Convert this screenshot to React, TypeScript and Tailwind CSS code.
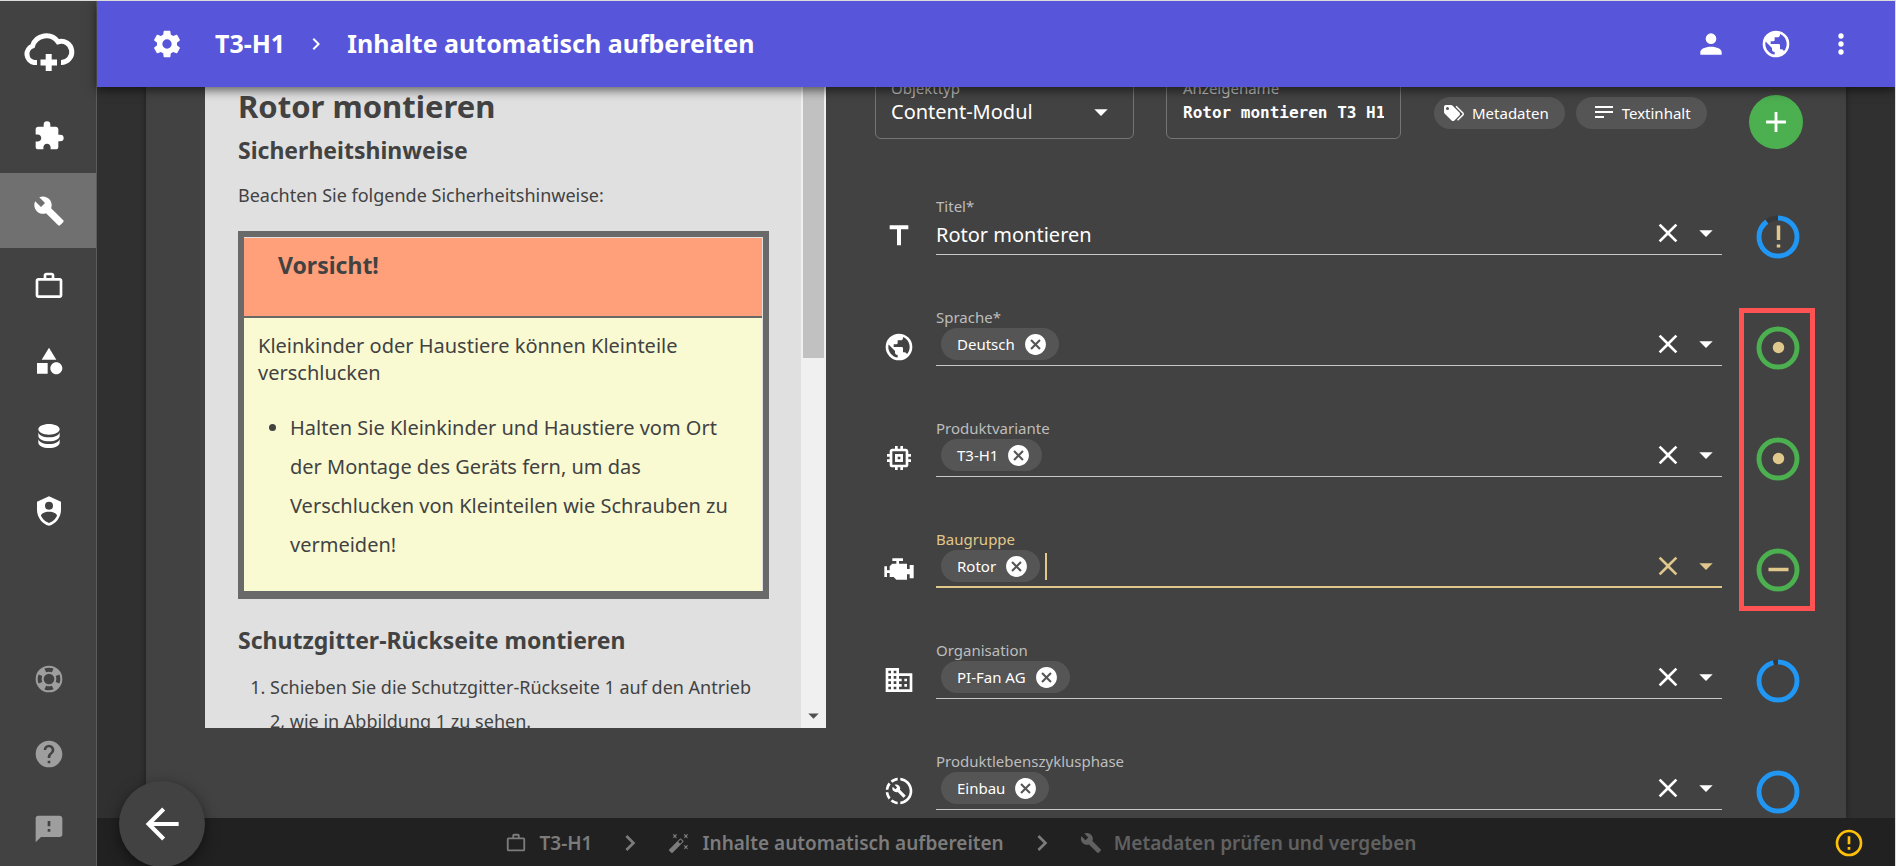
import { useState } from "react";
import type { ReactNode } from "react";

// Icon outlines on a 24x24 grid
const icons = {
  cog: "M12,15.5A3.5,3.5 0 0,1 8.5,12A3.5,3.5 0 0,1 12,8.5A3.5,3.5 0 0,1 15.5,12A3.5,3.5 0 0,1 12,15.5M19.43,12.97C19.47,12.65 19.5,12.33 19.5,12C19.5,11.67 19.47,11.34 19.43,11L21.54,9.37C21.73,9.22 21.78,8.95 21.66,8.73L19.66,5.27C19.54,5.05 19.27,4.96 19.05,5.05L16.56,6.05C16.04,5.66 15.5,5.32 14.87,5.07L14.5,2.42C14.46,2.18 14.25,2 14,2H10C9.75,2 9.54,2.18 9.5,2.42L9.13,5.07C8.5,5.32 7.96,5.66 7.44,6.05L4.95,5.05C4.73,4.96 4.46,5.05 4.34,5.27L2.34,8.73C2.21,8.95 2.27,9.22 2.46,9.37L4.57,11C4.53,11.34 4.5,11.67 4.5,12C4.5,12.33 4.53,12.65 4.57,12.97L2.46,14.63C2.27,14.78 2.21,15.05 2.34,15.27L4.34,18.73C4.46,18.95 4.73,19.03 4.95,18.95L7.44,17.94C7.96,18.34 8.5,18.68 9.13,18.93L9.5,21.58C9.54,21.82 9.75,22 10,22H14C14.25,22 14.46,21.82 14.5,21.58L14.87,18.93C15.5,18.67 16.04,18.34 16.56,17.94L19.05,18.95C19.27,19.03 19.54,18.95 19.66,18.73L21.66,15.27C21.78,15.05 21.73,14.78 21.54,14.63L19.43,12.97Z",
  puzzle: "M20.5,11H19V7C19,5.89 18.1,5 17,5H13V3.5A2.5,2.5 0 0,0 10.5,1A2.5,2.5 0 0,0 8,3.5V5H4A2,2 0 0,0 2,7V10.8H3.5C5,10.8 6.2,12 6.2,13.5C6.2,15 5,16.2 3.5,16.2H2V20A2,2 0 0,0 4,22H7.8V20.5C7.8,19 9,17.8 10.5,17.8C12,17.8 13.2,19 13.2,20.5V22H17A2,2 0 0,0 19,20V16H20.5A2.5,2.5 0 0,0 23,13.5A2.5,2.5 0 0,0 20.5,11Z",
  wrench: "M22.7,19L13.6,9.9C14.5,7.6 14,4.9 12.1,3C10.1,1 7.1,0.6 4.7,1.7L9,6L6,9L1.6,4.7C0.4,7.1 0.9,10.1 2.9,12.1C4.8,14 7.5,14.5 9.8,13.6L18.9,22.7C19.3,23.1 19.9,23.1 20.3,22.7L22.6,20.4C23.1,20 23.1,19.3 22.7,19Z",
  briefcase: "M20,6C20.58,6 21.05,6.2 21.42,6.59C21.8,7 22,7.45 22,8V19C22,19.55 21.8,20 21.42,20.41C21.05,20.8 20.58,21 20,21H4C3.42,21 2.95,20.8 2.58,20.41C2.2,20 2,19.55 2,19V8C2,7.45 2.2,7 2.58,6.59C2.95,6.2 3.42,6 4,6H8V4C8,3.42 8.2,2.95 8.58,2.58C8.95,2.2 9.42,2 10,2H14C14.58,2 15.05,2.2 15.42,2.58C15.8,2.95 16,3.42 16,4V6H20M4,8V19H20V8H4M14,6V4H10V6H14Z",
  shape: "M11,13.5V21.5H3V13.5H11M12,2L17.5,11H6.5L12,2M17.5,13C20,13 22,15 22,17.5C22,20 20,22 17.5,22C15,22 13,20 13,17.5C13,15 15,13 17.5,13Z",
  database: "M12,3C7.58,3 4,4.79 4,7C4,9.21 7.58,11 12,11C16.42,11 20,9.21 20,7C20,4.79 16.42,3 12,3M4,9V12C4,14.21 7.58,16 12,16C16.42,16 20,14.21 20,12V9C20,11.21 16.42,13 12,13C7.58,13 4,11.21 4,9M4,14V17C4,19.21 7.58,21 12,21C16.42,21 20,19.21 20,17V14C20,16.21 16.42,18 12,18C7.58,18 4,16.21 4,14Z",
  shield: "M12,1L3,5V11C3,16.55 6.84,21.74 12,23C17.16,21.74 21,16.55 21,11V5L12,1M12,5A3,3 0 0,1 15,8A3,3 0 0,1 12,11A3,3 0 0,1 9,8A3,3 0 0,1 12,5M17.13,17C15.92,18.85 14.11,20.24 12,20.92C9.89,20.24 8.08,18.85 6.87,17C6.53,16.5 6.24,16 6,15.47C6,13.82 8.71,12.47 12,12.47C15.29,12.47 18,13.79 18,15.47C17.76,16 17.47,16.5 17.13,17Z",
  lifebuoy: "M19.79,15.41C20.74,13.24 20.74,10.75 19.79,8.59L17.05,9.83C17.65,11.21 17.65,12.78 17.06,14.17L19.79,15.41M15.42,4.21C13.25,3.26 10.76,3.26 8.59,4.21L9.83,6.94C11.22,6.35 12.79,6.35 14.18,6.95L15.42,4.21M4.21,8.58C3.26,10.76 3.26,13.24 4.21,15.42L6.95,14.17C6.35,12.79 6.35,11.21 6.95,9.82L4.21,8.58M8.59,19.79C10.76,20.74 13.25,20.74 15.42,19.78L14.18,17.05C12.8,17.65 11.22,17.65 9.84,17.06L8.59,19.79M12,2A10,10 0 0,1 22,12A10,10 0 0,1 12,22A10,10 0 0,1 2,12A10,10 0 0,1 12,2M12,8A4,4 0 0,0 8,12A4,4 0 0,0 12,16A4,4 0 0,0 16,12A4,4 0 0,0 12,8Z",
  help: "M15.07,11.25L14.17,12.17C13.45,12.89 13,13.5 13,15H11V14.5C11,13.39 11.45,12.39 12.17,11.67L13.41,10.41C13.78,10.05 14,9.55 14,9C14,7.89 13.1,7 12,7A2,2 0 0,0 10,9H8A4,4 0 0,1 12,5A4,4 0 0,1 16,9C16,9.88 15.64,10.67 15.07,11.25M13,19H11V17H13M12,2A10,10 0 0,0 2,12A10,10 0 0,0 12,22A10,10 0 0,0 22,12C22,6.47 17.5,2 12,2Z",
  message: "M13,10H11V6H13M13,14H11V12H13M20,2H4A2,2 0 0,0 2,4V22L6,18H20A2,2 0 0,0 22,16V4C22,2.89 21.1,2 20,2Z",
  account: "M12,4A4,4 0 0,1 16,8A4,4 0 0,1 12,12A4,4 0 0,1 8,8A4,4 0 0,1 12,4M12,14C16.42,14 20,15.79 20,18V20H4V18C4,15.79 7.58,14 12,14Z",
  earth: "M17.9,17.39C17.64,16.59 16.89,16 16,16H15V13A1,1 0 0,0 14,12H8V10H10A1,1 0 0,0 11,9V7H13A2,2 0 0,0 15,5V4.59C17.93,5.77 20,8.64 20,12C20,14.08 19.2,15.97 17.9,17.39M11,19.93C7.05,19.44 4,16.08 4,12C4,11.38 4.08,10.78 4.21,10.21L9,15V16A2,2 0 0,0 11,18M12,2A10,10 0 0,0 2,12A10,10 0 0,0 12,22A10,10 0 0,0 22,12A10,10 0 0,0 12,2Z",
  dots: "M12,16A2,2 0 0,1 14,18A2,2 0 0,1 12,20A2,2 0 0,1 10,18A2,2 0 0,1 12,16M12,10A2,2 0 0,1 14,12A2,2 0 0,1 12,14A2,2 0 0,1 10,12A2,2 0 0,1 12,10M12,4A2,2 0 0,1 14,6A2,2 0 0,1 12,8A2,2 0 0,1 10,6A2,2 0 0,1 12,4Z",
  title: "M5,4V7H10.5V19H13.5V7H19V4H5Z",
  memory: "M17,17H7V7H17M21,11V9H19V7C19,5.89 18.1,5 17,5H15V3H13V5H11V3H9V5H7C5.89,5 5,5.89 5,7V9H3V11H5V13H3V15H5V17A2,2 0 0,0 7,19H9V21H11V19H13V21H15V19H17A2,2 0 0,0 19,17V15H21V13H19V11M13,13H11V11H13M15,9H9V15H15V9Z",
  engine: "M7,4V6H10V8H7L5,10V13H3V10H1V18H3V15H5V18H8L10,20H18V16H20V19H23V9H20V12H18V8H12V6H15V4H7Z",
  domain: "M18,15H16V17H18M18,11H16V13H18M20,19H12V17H14V15H12V13H14V11H12V9H20M10,7H8V5H10M10,11H8V9H10M10,15H8V13H10M10,19H8V17H10M6,7H4V5H6M6,11H4V9H6M6,15H4V13H6M6,19H4V17H6M12,7V3H2V21H22V7H12Z",
  progressWrench: "M13 2.03V4.05C17.39 4.59 20.5 8.58 19.96 12.97C19.5 16.61 16.64 19.5 13 19.93V21.93C18.5 21.38 22.5 16.5 21.95 11C21.5 6.25 17.73 2.5 13 2.03M11 2.06C9.05 2.25 7.19 3 5.67 4.26L7.1 5.74C8.22 4.84 9.57 4.26 11 4.06V2.06M4.26 5.67C3 7.19 2.25 9.04 2.05 11H4.05C4.24 9.58 4.8 8.23 5.69 7.1L4.26 5.67M2.06 13C2.26 14.96 3.03 16.81 4.27 18.33L5.69 16.9C4.81 15.77 4.24 14.42 4.06 13H2.06M7.1 18.37L5.67 19.74C7.18 21 9.04 21.79 11 22V20C9.58 19.82 8.23 19.25 7.1 18.37M16.82 15.19L12.71 11.08C13.12 10.04 12.89 8.82 12.03 7.97C11.13 7.06 9.78 6.88 8.69 7.38L10.63 9.32L9.28 10.68L7.29 8.73C6.75 9.82 7 11.17 7.88 12.08C8.74 12.94 9.96 13.16 11 12.76L15.11 16.86C15.29 17.05 15.56 17.05 15.74 16.86L16.78 15.83C17 15.65 17 15.33 16.82 15.19Z",
  tags: "M5.5,9A1.5,1.5 0 0,0 7,7.5A1.5,1.5 0 0,0 5.5,6A1.5,1.5 0 0,0 4,7.5A1.5,1.5 0 0,0 5.5,9M17.41,11.58C17.77,11.94 18,12.44 18,13C18,13.55 17.78,14.05 17.41,14.41L12.41,19.41C12.05,19.77 11.55,20 11,20C10.45,20 9.95,19.78 9.58,19.41L2.59,12.42C2.22,12.05 2,11.55 2,11V6C2,4.89 2.89,4 4,4H9C9.55,4 10.05,4.22 10.41,4.58L17.41,11.58M13.54,5.71L14.54,4.71L21.41,11.58C21.78,11.94 22,12.45 22,13C22,13.55 21.78,14.05 21.42,14.41L16.04,19.79L15.04,18.79L20.75,13L13.54,5.71Z",
  text: "M21,5V7H3V5H21M3,17H12V15H3V17M3,12H21V10H3V12Z",
  close: "M19,6.41L17.59,5L12,10.59L6.41,5L5,6.41L10.59,12L5,17.59L6.41,19L12,13.41L17.59,19L19,17.59L13.41,12L19,6.41Z",
  caret: "M7,10L12,15L17,10H7Z",
  closeCircle: "M12,2C17.53,2 22,6.47 22,12C22,17.53 17.53,22 12,22C6.47,22 2,17.53 2,12C2,6.47 6.47,2 12,2M15.59,7L12,10.59L8.41,7L7,8.41L10.59,12L7,15.59L8.41,17L12,13.41L15.59,17L17,15.59L13.41,12L17,8.41L15.59,7Z",
  chevron: "M8.59,16.58L13.17,12L8.59,7.41L10,6L16,12L10,18L8.59,16.58Z",
  plus: "M19,13H13V19H11V13H5V11H11V5H13V11H19V13Z",
  arrowLeft: "M20,11V13H8L13.5,18.5L12.08,19.92L4.16,12L12.08,4.08L13.5,5.5L8,11H20Z",
  wand: "M7.5,5.6L5,7L6.4,4.5L5,2L7.5,3.4L10,2L8.6,4.5L10,7L7.5,5.6M19.5,15.4L22,14L20.6,16.5L22,19L19.5,17.6L17,19L18.4,16.5L17,14L19.5,15.4M22,2L20.6,4.5L22,7L19.5,5.6L17,7L18.4,4.5L17,2L19.5,3.4L22,2M13.34,12.78L15.78,10.34L13.66,8.22L11.22,10.66L13.34,12.78M14.37,7.29L16.71,9.63C17.1,10 17.1,10.65 16.71,11.04L5.04,22.71C4.65,23.1 4,23.1 3.63,22.71L1.29,20.37C0.9,20 0.9,19.35 1.29,18.96L12.96,7.29C13.35,6.9 14,6.9 14.37,7.29Z",
  alert: "M11,15H13V17H11V15M11,7H13V13H11V7M12,2C6.47,2 2,6.5 2,12A10,10 0 0,0 12,22A10,10 0 0,0 22,12A10,10 0 0,0 12,2M12,20A8,8 0 0,1 4,12A8,8 0 0,1 12,4A8,8 0 0,1 20,12A8,8 0 0,1 12,20Z",
};

type IconName = keyof typeof icons;

function Icon({ name, className = "size-8" }: { name: IconName; className?: string }) {
  return (
    <svg viewBox="0 0 24 24" fill="currentColor" className={`shrink-0 ${className}`} aria-hidden="true">
      <path d={icons[name]} />
    </svg>
  );
}

const mainNav: { icon: IconName; label: string; active?: boolean }[] = [
  { icon: "puzzle", label: "Module" },
  { icon: "wrench", label: "Werkzeuge", active: true },
  { icon: "briefcase", label: "Projekte" },
  { icon: "shape", label: "Klassen" },
  { icon: "database", label: "Daten" },
  { icon: "shield", label: "Benutzer" },
];

const helpNav: { icon: IconName; label: string }[] = [
  { icon: "lifebuoy", label: "Support" },
  { icon: "help", label: "Hilfe" },
  { icon: "message", label: "Feedback" },
];

type Mark = "alert" | "dot" | "minus";

interface FieldData {
  id: string;
  label: string;
  icon: IconName;
  value?: string;
  chip?: string;
  focused?: boolean;
  score: number;
  tone: "blue" | "green";
  mark?: Mark;
}

const fields: FieldData[] = [
  { id: "titel", label: "Titel*", icon: "title", value: "Rotor montieren", score: 90, tone: "blue", mark: "alert" },
  { id: "sprache", label: "Sprache*", icon: "earth", chip: "Deutsch", score: 100, tone: "green", mark: "dot" },
  { id: "variante", label: "Produktvariante", icon: "memory", chip: "T3-H1", score: 100, tone: "green", mark: "dot" },
  { id: "baugruppe", label: "Baugruppe", icon: "engine", chip: "Rotor", focused: true, score: 100, tone: "green", mark: "minus" },
  { id: "organisation", label: "Organisation", icon: "domain", chip: "PI-Fan AG", score: 96, tone: "blue" },
  { id: "phase", label: "Produktlebenszyklusphase", icon: "progressWrench", chip: "Einbau", score: 100, tone: "blue" },
];

export default function App() {
  return (
    <div className="flex h-screen overflow-hidden border-t border-r border-[#dcdcdc] bg-[#303030] font-['Noto_Sans',sans-serif] text-white">
      <Sidebar />
      <div className="relative flex min-w-0 flex-1 flex-col">
        <Header />
        <main className="mx-[49px] min-h-0 flex-1 overflow-hidden bg-[#424242] pr-3 pl-[59px] shadow-[0_0_6px_rgba(0,0,0,0.4)]">
          <div className="grid grid-cols-[621fr_959fr] gap-[49px]">
            <Preview />
            <MetadataForm />
          </div>
        </main>
        <Footer />
        <button aria-label="Zurück"
          className="absolute -bottom-px left-[22px] flex size-[86px] items-center justify-center rounded-full bg-[#424242] shadow-[0_4px_14px_rgba(0,0,0,0.5)]">
          <Icon name="arrowLeft" className="size-[50px]" />
        </button>
      </div>
    </div>
  );
}

function Sidebar() {
  return (
    <nav className="flex w-[97px] shrink-0 flex-col border-r border-[#5c5c5c] bg-[#424242]">
      <a href="#start" aria-label="Start" className="flex h-[97px] items-center justify-center pt-1 pl-0.5">
        <svg viewBox="22 30 54 42" className="h-[42px] w-[54px]" fill="none" stroke="currentColor" strokeWidth="5">
          <path d="M37 61.5H34A8.6 8.6 0 0 1 32.5 45A14.4 14.4 0 0 1 58 40.8A10.6 10.6 0 1 1 61 61.5" />
          <path d="M48.7 53V70M40.5 61.5H57" strokeWidth="6" />
        </svg>
      </a>
      {mainNav.map((item) => (
        <a key={item.icon} href={`#${item.icon}`} aria-label={item.label}
          className={`flex h-[75px] items-center justify-center pl-px ${item.active ? "bg-[#707070]" : ""}`}>
          <Icon name={item.icon} />
        </a>
      ))}
      <div className="mt-auto text-[#9e9e9e]">
        {helpNav.map((item) => (
          <a key={item.icon} href={`#${item.icon}`} aria-label={item.label}
            className="flex h-[75px] items-center justify-center pl-px">
            <Icon name={item.icon} />
          </a>
        ))}
      </div>
    </nav>
  );
}

function Header() {
  return (
    <header className="relative z-10 flex h-[86px] shrink-0 items-center bg-[#5755d9] pr-[38px] pl-[54px] shadow-[0_3px_10px_rgba(0,0,0,0.6)]">
      <Icon name="cog" />
      <h1 className="ml-8 flex items-center gap-[19px] text-[25px] font-bold">
        <span>T3-H1</span>
        <Icon name="chevron" className="size-6" />
        <span>Inhalte automatisch aufbereiten</span>
      </h1>
      <div className="ml-auto flex gap-[33px]">
        <button aria-label="Konto"><Icon name="account" /></button>
        <button aria-label="Sprache"><Icon name="earth" /></button>
        <button aria-label="Mehr"><Icon name="dots" /></button>
      </div>
    </header>
  );
}

function Preview() {
  return (
    <section className="flex h-[641px] overflow-hidden bg-[#e0e0e0] text-[#424242]">
      <div className="min-w-0 flex-1 pr-8 pl-[33px]">
        <h2 className="text-[31px] leading-[38px] font-bold">Rotor montieren</h2>
        <h3 className="mt-2.5 text-[23px] leading-[30px] font-bold">Sicherheitshinweise</h3>
        <p className="mt-4 text-[18px] leading-7">Beachten Sie folgende Sicherheitshinweise:</p>
        <div className="mt-[22px] border-6 border-b-8 border-[#696969]">
          <div className="border-t border-r border-[#e0e0e0]">
            <div className="h-20 border-b-2 border-[#696969] bg-[#ffa07a] px-[34px] pt-3 text-[23px] leading-[30px] font-bold">
              Vorsicht!
            </div>
            <div className="h-[273px] bg-[#fafad2] px-3.5 pt-3.5 text-[20px]">
              <p className="leading-[27px]">Kleinkinder oder Haustiere können Kleinteile verschlucken</p>
              <ul className="mt-[22px] list-disc pl-8 leading-[39px]">
                <li>Halten Sie Kleinkinder und Haustiere vom Ort der Montage des Geräts fern, um das Verschlucken von Kleinteilen wie Schrauben zu vermeiden!</li>
              </ul>
            </div>
          </div>
        </div>
        <h3 className="mt-[26px] text-[23px] leading-[30px] font-bold">Schutzgitter-Rückseite montieren</h3>
        <ol className="mt-[15px] list-decimal pl-8 text-[18px] leading-[34px]">
          <li>Schieben Sie die Schutzgitter-Rückseite 1 auf den Antrieb 2, wie in Abbildung 1 zu sehen.</li>
        </ol>
      </div>
      {/* Scroll track */}
      <div className="flex w-[25px] shrink-0 flex-col items-center justify-between bg-[#f0f0f0]">
        <div className="h-[271px] w-[21px] bg-[#c1c1c1]" />
        <Icon name="caret" className="size-[25px] text-[#505050]" />
      </div>
    </section>
  );
}

function MetadataForm() {
  const [name, setName] = useState("Rotor montieren T3 H1");

  return (
    <form className="-mt-6 min-w-0">
      <div className="flex h-[76px] items-center">
        <div className="relative flex h-full w-[259px] flex-col rounded-md border border-[#757575] px-[15px] pt-3.5">
          <label htmlFor="objekttyp" className="text-[15px] leading-5 text-[#bdbdbd]">Objekttyp</label>
          <select id="objekttyp" className="h-7 appearance-none text-[20px] leading-7 outline-none">
            <option>Content-Modul</option>
          </select>
          <Icon name="caret" className="pointer-events-none absolute right-4 bottom-2.5 size-8" />
        </div>
        <div className="ml-8 flex h-full w-[235px] flex-col rounded-md border border-[#757575] px-4 pt-3.5">
          <label htmlFor="anzeigename" className="text-[15px] leading-5 text-[#bdbdbd]">Anzeigename</label>
          <input id="anzeigename" value={name} onChange={(e) => setName(e.target.value)}
            className="h-7 w-full font-['DejaVu_Sans_Mono',monospace] text-base font-bold outline-none" />
        </div>
        <div className="ml-[33px] flex gap-[11px] pt-6">
          <TabChip icon="tags" className="pr-4 pl-2">Metadaten</TabChip>
          <TabChip icon="text" className="pr-4 pl-4">Textinhalt</TabChip>
        </div>
        <button type="button" aria-label="Hinzufügen"
          className="mt-[42px] mr-[31px] ml-auto flex size-[54px] items-center justify-center rounded-full bg-[#4caf50]">
          <Icon name="plus" className="size-[34px]" />
        </button>
      </div>

      <div className="relative mt-[5px]">
        {fields.map((field) => (
          <FieldRow key={field.id} field={field} />
        ))}
        {/* Highlight around the confirmed predictions */}
        <div className="pointer-events-none absolute top-[164px] right-[19px] h-[303px] w-[76px] border-5 border-[#ff5252]" />
      </div>
    </form>
  );
}

function TabChip({ icon, className, children }: { icon: IconName; className: string; children: ReactNode }) {
  return (
    <button type="button"
      className={`flex h-8 items-center gap-1.5 rounded-full bg-[#555] text-[15px] ${className}`}>
      <Icon name={icon} className="size-6" />
      {children}
    </button>
  );
}

function FieldRow({ field }: { field: FieldData }) {
  const [value, setValue] = useState(field.value ?? "");
  const { id, label, icon, chip, focused } = field;

  return (
    <div className="flex h-[111px] items-end">
      <div className="mr-[13px] flex w-12 justify-center pb-[3px]">
        <Icon name={icon} />
      </div>
      <div className={`min-w-0 flex-1 ${focused ? "border-b-2 border-[#e0c78b] text-[#e0c78b]" : "border-b border-[#c8c8c8]"}`}>
        <label htmlFor={id} className={`block pb-0.5 text-[15px] leading-[18px] ${focused ? "" : "text-[#bdbdbd]"}`}>{label}</label>
        <div className={`flex items-start ${focused ? "h-9" : "h-[37px]"}`}>
          {chip && (
            <span className="ml-[5px] flex h-8 shrink-0 items-center gap-2 rounded-full bg-[#555] pr-[11px] pl-4 text-[15px] text-white">
              {chip}
              <button type="button" aria-label={`${chip} entfernen`}>
                <Icon name="closeCircle" className="size-[25px]" />
              </button>
            </span>
          )}
          {focused && <span className="mt-[3px] ml-[5px] h-[27px] w-0.5 shrink-0 bg-[#e0c78b]" />}
          <input id={id} value={value} onChange={(e) => setValue(e.target.value)}
            className="h-[34px] min-w-0 flex-1 text-[20px] outline-none" />
          <div className="flex gap-1.5">
            <button type="button" aria-label={`${label} leeren`} onClick={() => setValue("")}>
              <Icon name="close" />
            </button>
            <button type="button" aria-label={`${label} öffnen`}>
              <Icon name="caret" />
            </button>
          </div>
        </div>
      </div>
      <div className="-mb-1 flex w-28 justify-center">
        <ScoreRing score={field.score} tone={field.tone} mark={field.mark} />
      </div>
    </div>
  );
}

function ScoreRing({ score, tone, mark }: { score: number; tone: "blue" | "green"; mark?: Mark }) {
  return (
    <svg viewBox="0 0 44 44" className="size-11" fill="none" role="img" aria-label={`${score} %`}>
      <circle cx="22" cy="22" r="19" stroke="#383838" strokeWidth="5" />
      <circle cx="22" cy="22" r="19" stroke={tone === "green" ? "#4caf50" : "#2196f3"} strokeWidth="5"
        pathLength={100} strokeDasharray={`${score} ${100 - score}`} transform="rotate(-90 22 22)" />
      {mark === "alert" && <path d="M22.5 10.5V25M22.5 29.5V32.5" stroke="#e0c78b" strokeWidth="3.5" />}
      {mark === "dot" && <circle cx="22.5" cy="21.5" r="5.7" fill="#e0c78b" />}
      {mark === "minus" && <path d="M12.5 21.5H32.5" stroke="#e0c78b" strokeWidth="3.5" />}
    </svg>
  );
}

function Footer() {
  return (
    <footer className="flex h-12 shrink-0 items-center bg-[#212121] pt-0.5 pr-[30px] text-[19px] font-semibold text-[#7c7c7c]">
      <nav className="flex flex-1 items-center justify-center pr-2">
        <a href="#projekt" className="flex items-center gap-3">
          <Icon name="briefcase" className="size-[22px]" />
          T3-H1
        </a>
        <Icon name="chevron" className="mx-[22px] size-8" />
        <a href="#aufbereiten" className="flex items-center gap-3">
          <Icon name="wand" className="size-[22px]" />
          Inhalte automatisch aufbereiten
        </a>
        <Icon name="chevron" className="mx-[22px] size-8" />
        <a href="#metadaten" className="flex items-center gap-3 text-[#616161]">
          <Icon name="wrench" className="size-[22px]" />
          Metadaten prüfen und vergeben
        </a>
      </nav>
      <button aria-label="Warnungen" className="text-[#ffc107]"><Icon name="alert" /></button>
    </footer>
  );
}
